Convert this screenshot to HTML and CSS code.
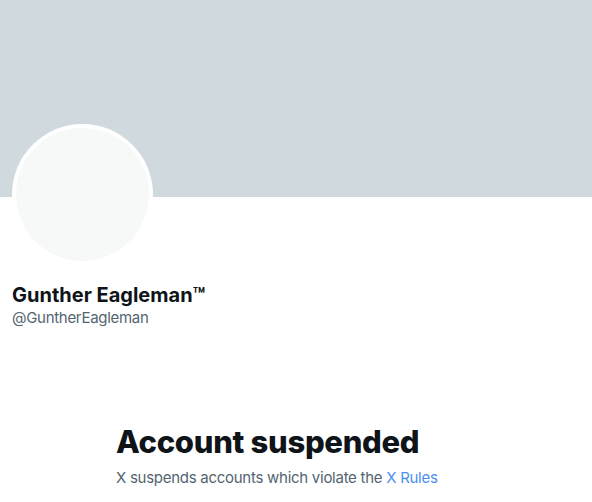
FILE: index.html
```html
<!DOCTYPE html>
<html>
<head>
<meta charset="utf-8">
<link rel="stylesheet" href="styles.css">
</head>
<body>
<div class="banner"></div>
<div class="profile">
  <div class="avatar"><div class="avatar-inner"></div></div>
  <div class="name">Gunther Eagleman™</div>
  <div class="handle">@GuntherEagleman</div>
</div>
<div class="empty">
  <h1 class="title">Account suspended</h1>
  <p class="desc">X suspends accounts which violate the <a class="link" href="#">X Rules</a></p>
</div>
</body>
</html>
```
FILE: styles.css
```css
html, body {
  margin: 0;
  padding: 0;
  background: #ffffff;
  font-family: Inter, "Noto Sans", "Liberation Sans", sans-serif;
  color: #0f1419;
}
.banner {
  height: 197px;
  background: #cfd9de;
}
.profile {
  padding: 0 12px;
}
.avatar {
  width: 141px;
  height: 141px;
  margin-top: -73px;
  border-radius: 50%;
  background: #ffffff;
  display: flex;
  align-items: center;
  justify-content: center;
}
.avatar-inner {
  width: 133px;
  height: 133px;
  border-radius: 50%;
  background: #f7f9f9;
}
.name {
  margin-top: 18px;
  font-size: 20px;
  font-weight: 700;
  line-height: 24px;
}
.handle {
  margin-top: 1px;
  font-size: 15px;
  line-height: 20px;
  letter-spacing: -0.3px;
  color: #536471;
}
.empty {
  width: 360px;
  margin: 96px auto 0;
}
.title {
  margin: 0;
  font-size: 31px;
  font-weight: 800;
  line-height: 36px;
  letter-spacing: -0.3px;
}
.desc {
  margin: 8px 0 0;
  font-size: 15px;
  line-height: 20px;
  letter-spacing: -0.27px;
  color: #536471;
}
.link {
  color: #4a8ff0;
  text-decoration: none;
}
```
